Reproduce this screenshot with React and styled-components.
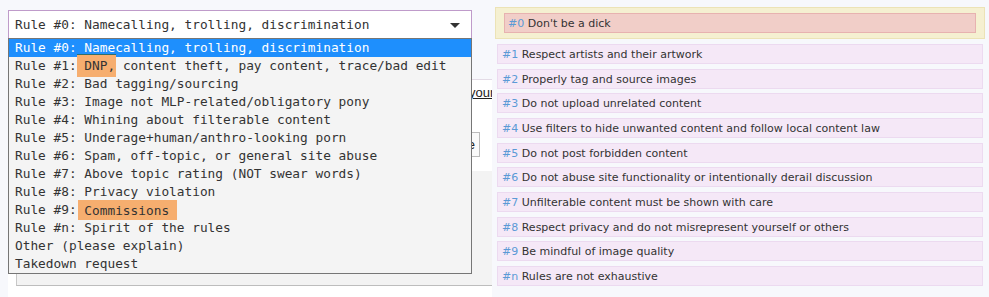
import React from 'react'
import styled, { createGlobalStyle } from 'styled-components'

const GlobalStyle = createGlobalStyle`
    html, body {
        margin: 0;
        padding: 0;
        background-color: #f7f8fc;
    }
    body {
        font-family: "DejaVu Sans", Verdana, sans-serif;
    }
`

const Page = styled.div`
    display: flex;
    width: 989px;
    height: 297px;
    overflow: hidden;
`

const LeftColumn = styled.div`
    width: 484px;
    margin-left: 8px;
    padding-top: 10px;
    display: flex;
    flex-direction: column;
    overflow: hidden;
`

const SelectWrap = styled.div`
    position: relative;
    width: 464px;
`

const SelectBox = styled.div`
    display: flex;
    align-items: center;
    justify-content: space-between;
    box-sizing: border-box;
    height: 29px;
    padding: 0 11px 0 6px;
    border: 1px solid #bf9bca;
    background-color: #fff;
    font-family: "DejaVu Sans Mono", "Liberation Mono", monospace;
    font-size: 12.8px;
    color: #333;
    white-space: nowrap;
`

const Caret = styled.span`
    width: 0;
    height: 0;
    border-left: 5px solid transparent;
    border-right: 5px solid transparent;
    border-top: 5px solid #333;
    margin-top: 1px;
`

const OptionList = styled.ul`
    position: absolute;
    top: 28px;
    left: 0;
    z-index: 5;
    box-sizing: border-box;
    width: 464px;
    margin: 0;
    padding: 0;
    list-style: none;
    border: 1px solid #767676;
    background-color: #f4f4f4;
    font-family: "DejaVu Sans Mono", "Liberation Mono", monospace;
    font-size: 12.8px;
`

const Option = styled.li`
    height: 18px;
    line-height: 18px;
    padding-left: 6px;
    white-space: nowrap;
    color: ${p => (p.$selected ? '#fff' : '#333')};
    background-color: ${p => (p.$selected ? '#1e8ffd' : 'transparent')};
`

const Mark = styled.span`
    background-color: #f6ae6f;
    padding: ${p => (p.$tall ? '3px 1px 4px 7px' : '2.5px 8px 2.5px 6px')};
    margin: ${p => (p.$tall ? '0 -1px 0 -7px' : '0 -8px 0 -6px')};
    border-top: ${p => (p.$tall ? '1px solid #2f6f6a' : 'none')};
`

const Panel = styled.div`
    flex: 1;
    margin-top: 40px;
    padding-left: 8px;
    border-top: 1px solid #e3dbe6;
    background-color: #fff;
    display: flex;
    flex-direction: column;
    font-family: "Liberation Sans", Arial, sans-serif;
    font-size: 13px;
    color: #222;
`

const Notice = styled.div`
    display: flex;
    justify-content: flex-end;
    padding-top: 5px;
    line-height: 16px;
    white-space: nowrap;
`

const NoticeLink = styled.a`
    margin-right: -6px;
    color: #222;
    text-decoration: underline;
`

const ButtonRow = styled.div`
    display: flex;
    justify-content: flex-end;
    padding-right: 12px;
    margin-top: 31px;
`

const Button = styled.button`
    height: 25px;
    padding: 0 4px 0 8px;
    border: 1px solid #bbb;
    border-radius: 0;
    background-color: #fafafa;
    font-family: "Liberation Sans", Arial, sans-serif;
    font-size: 13px;
    color: #222;
`

const GrayBox = styled.div`
    margin-top: 14px;
    height: 114px;
    background-color: #f3f3f3;
    border-left: 1px solid #c8c8c8;
    border-bottom: 1px solid #bdbdbd;
`

const RightColumn = styled.div`
    width: 490px;
    margin-left: 3px;
    padding-top: 7px;
    display: flex;
    flex-direction: column;
    font-family: "DejaVu Sans", Verdana, sans-serif;
    font-size: 11px;
    color: #333;
`

const Featured = styled.div`
    border: 1px solid #ece3b6;
    background-color: #f5f0d1;
    padding: 5px 8px;
    margin-bottom: 5px;
`

const RuleItem = styled.div`
    box-sizing: border-box;
    height: 20px;
    line-height: 19px;
    padding-left: ${p => (p.$danger ? '3px' : '4px')};
    border: 1px solid ${p => (p.$danger ? '#e7b2b0' : '#ecdaf0')};
    background-color: ${p => (p.$danger ? '#f1cec8' : '#f5e8f7')};
    white-space: nowrap;
`

const RuleList = styled.div`
    display: flex;
    flex-direction: column;
    gap: 4.67px;
    margin: 0 2px;
`

const Num = styled.span`
    color: #5b9ad6;
`

const options = [
    'Rule #0: Namecalling, trolling, discrimination',
    'Rule #1: ',
    'Rule #2: Bad tagging/sourcing',
    'Rule #3: Image not MLP-related/obligatory pony',
    'Rule #4: Whining about filterable content',
    'Rule #5: Underage+human/anthro-looking porn',
    'Rule #6: Spam, off-topic, or general site abuse',
    'Rule #7: Above topic rating (NOT swear words)',
    'Rule #8: Privacy violation',
    'Rule #9: ',
    'Rule #n: Spirit of the rules',
    'Other (please explain)',
    'Takedown request',
]

const rules = [
    ['#1', 'Respect artists and their artwork'],
    ['#2', 'Properly tag and source images'],
    ['#3', 'Do not upload unrelated content'],
    ['#4', 'Use filters to hide unwanted content and follow local content law'],
    ['#5', 'Do not post forbidden content'],
    ['#6', 'Do not abuse site functionality or intentionally derail discussion'],
    ['#7', 'Unfilterable content must be shown with care'],
    ['#8', 'Respect privacy and do not misrepresent yourself or others'],
    ['#9', 'Be mindful of image quality'],
    ['#n', 'Rules are not exhaustive'],
]

function App() {
    return (
        <>
            <GlobalStyle />
            <Page>
                <LeftColumn>
                    <SelectWrap>
                        <SelectBox>
                            <span>{options[0]}</span>
                            <Caret />
                        </SelectBox>
                        <OptionList>
                            {options.map((o, i) => (
                                <Option key={i} $selected={i === 0}>
                                    {o}
                                    {i === 1 && (
                                        <>
                                            <Mark $tall>DNP,</Mark> content theft, pay content, trace/bad edit
                                        </>
                                    )}
                                    {i === 9 && <Mark>Commissions</Mark>}
                                </Option>
                            ))}
                        </OptionList>
                    </SelectWrap>
                    <Panel>
                        <Notice>
                            <NoticeLink>Read the rules before you send your{'\u00a0'}</NoticeLink>
                        </Notice>
                        <ButtonRow>
                            <Button>Save</Button>
                        </ButtonRow>
                        <GrayBox />
                    </Panel>
                </LeftColumn>
                <RightColumn>
                    <Featured>
                        <RuleItem $danger>
                            <Num>#0</Num> Don't be a dick
                        </RuleItem>
                    </Featured>
                    <RuleList>
                        {rules.map(([n, t]) => (
                            <RuleItem key={n}>
                                <Num>{n}</Num> {t}
                            </RuleItem>
                        ))}
                    </RuleList>
                </RightColumn>
            </Page>
        </>
    )
}

export default App
